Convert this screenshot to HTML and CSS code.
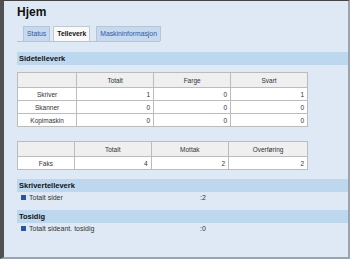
FILE: index.html
```html
<!DOCTYPE html>
<html lang="no">
<head>
    <meta charset="UTF-8">
    <title>Hjem</title>
    <link rel="stylesheet" href="styles.css">
</head>
<body>
    <div class="frame">
        <h1>Hjem</h1>
        <div class="tabs">
            <span class="tab">Status</span>
            <span class="tab active">Telleverk</span>
            <span class="tab">Maskininformasjon</span>
        </div>

        <div class="section-title">Sidetelleverk</div>
        <table class="counter">
            <tr><th></th><th>Totalt</th><th>Farge</th><th>Svart</th></tr>
            <tr><td class="name">Skriver</td><td>1</td><td>0</td><td>1</td></tr>
            <tr><td class="name">Skanner</td><td>0</td><td>0</td><td>0</td></tr>
            <tr><td class="name">Kopimaskin</td><td>0</td><td>0</td><td>0</td></tr>
        </table>
        <table class="counter fax">
            <tr><th></th><th>Totalt</th><th>Mottak</th><th>Overføring</th></tr>
            <tr><td class="name">Faks</td><td>4</td><td>2</td><td>2</td></tr>
        </table>

        <div class="section-title">Skrivertelleverk</div>
        <div class="item"><span class="label">Totalt sider</span><span>:2</span></div>

        <div class="section-title">Tosidig</div>
        <div class="item"><span class="label">Totalt sideant. tosidig</span><span>:0</span></div>
    </div>
</body>
</html>
```

FILE: styles.css
```css
body { margin: 0; font-family: "Liberation Sans", Arial, sans-serif; background: #dfe9f5; }
.frame { width: 350px; height: 259px; box-sizing: border-box; border-top: 1px solid #444; border-left: 4px solid #505050; border-right: 2px solid #9aa4b0; border-bottom: 2px solid #9aa4b0; padding: 0 0 0 13px; background: #dfe9f5; overflow: hidden; }
h1 { font-size: 12px; margin: 5px 0 0; height: 19px; line-height: 12px; color: #111; }
.tabs { display: flex; gap: 3px; padding-left: 6px; width: 137px; border-bottom: 1px solid #b8c4d0; height: 16px; margin-bottom: 10px; }
.tab { font-size: 6.8px; color: #2b5aa8; background: #c6d9ee; border: 1px solid #b4c6da; border-bottom: none; padding: 0 3px; line-height: 14px; margin-top: 1px; }
.tab.active { background: #f9f9f9; color: #111; font-weight: bold; border-color: #c0c8d0; margin-right: 3px; }
.section-title { background: #bdd7ee; font-size: 7.5px; font-weight: bold; color: #111; height: 13px; line-height: 13px; padding-left: 2px; }
.counter { border-collapse: collapse; width: 291px; margin-top: 7px; margin-bottom: 14px; font-size: 6.5px; color: #333; }
.counter th, .counter td { border: 1px solid #bcbcbc; padding: 0 3px; }
.counter th { background: #efefef; font-weight: normal; height: 14px; width: 78px; }
.counter th:first-child { width: 55px; }
.counter td { background: #fff; text-align: right; height: 12px; }
.counter td.name { text-align: center; }
.counter.fax { margin-bottom: 9px; }
.item { display: flex; font-size: 7px; color: #333; height: 18px; line-height: 12px; padding-left: 4px; }
.item .label { width: 179px; }
.item .label::before { content: ""; display: inline-block; width: 5px; height: 5px; background: #2a5598; margin-right: 3px; }
```
